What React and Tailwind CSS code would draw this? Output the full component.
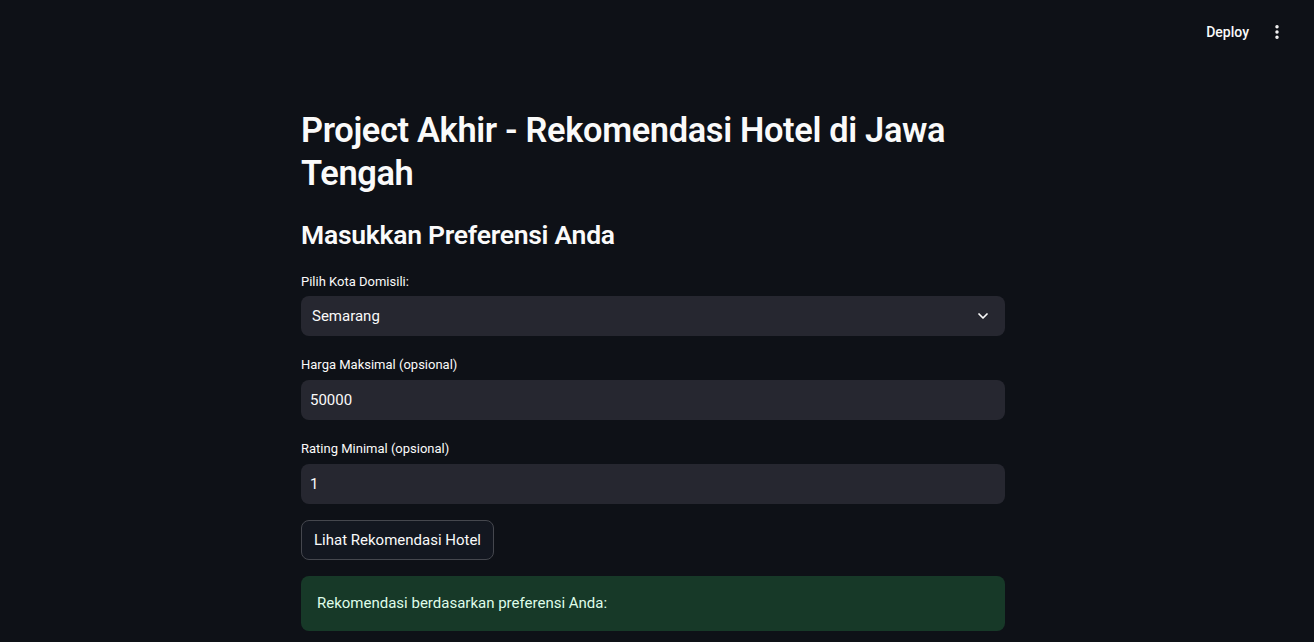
import React from "react";
import { ChevronDown, EllipsisVertical } from "lucide-react";

export default function App() {
  return (
    <div
      className="min-h-[642px] w-full bg-[#0e1117] text-[#fafafa] flex flex-col"
      style={{ fontFamily: "Roboto, 'Liberation Sans', sans-serif" }}
    >
      <header className="h-[64px] flex items-center justify-end pr-[23px] gap-[6px]">
        <button className="text-[14px] font-medium text-[#fafafa] px-[8px] py-[4px]">Deploy</button>
        <button className="w-[28px] h-[28px] flex items-center justify-center text-[#fafafa]">
          <EllipsisVertical size={18} strokeWidth={2.6} />
        </button>
      </header>
      <main className="pr-[8px] pt-[45px]">
        <div className="w-[704px] mx-auto flex flex-col">
          <h1 className="text-[34.4px] leading-[43px] font-semibold tracking-[-0.01em]">
            Project Akhir - Rekomendasi Hotel di Jawa Tengah
          </h1>
          <h2 className="mt-[23px] text-[26.5px] leading-[34px] font-semibold tracking-[-0.01em]">
            Masukkan Preferensi Anda
          </h2>
          <label className="mt-[19px] text-[13px] leading-[22px]">Pilih Kota Domisili:</label>
          <div className="mt-[3px] h-[40px] rounded-[8px] bg-[#262730] flex items-center justify-between pl-[11px] pr-[14px]">
            <span className="text-[15px]">Semarang</span>
            <ChevronDown size={16} strokeWidth={2.6} />
          </div>
          <label className="mt-[18px] text-[13px] leading-[22px]">Harga Maksimal (opsional)</label>
          <div className="mt-[4px] h-[40px] rounded-[8px] bg-[#262730] flex items-center pl-[9px]">
            <span className="text-[15px]">50000</span>
          </div>
          <label className="mt-[18px] text-[13px] leading-[22px]">Rating Minimal (opsional)</label>
          <div className="mt-[4px] h-[40px] rounded-[8px] bg-[#262730] flex items-center pl-[9px]">
            <span className="text-[15px]">1</span>
          </div>
          <div className="mt-[16px]">
            <button className="h-[40px] px-[12px] rounded-[8px] border border-[#45474e] bg-[#131720] text-[15px] text-[#fafafa]">
              Lihat Rekomendasi Hotel
            </button>
          </div>
          <div className="mt-[16px] h-[55px] rounded-[8px] bg-[#173928] flex items-center px-[16px] text-[15px] text-[#dffde9]">
            Rekomendasi berdasarkan preferensi Anda:
          </div>
        </div>
      </main>
    </div>
  );
}
